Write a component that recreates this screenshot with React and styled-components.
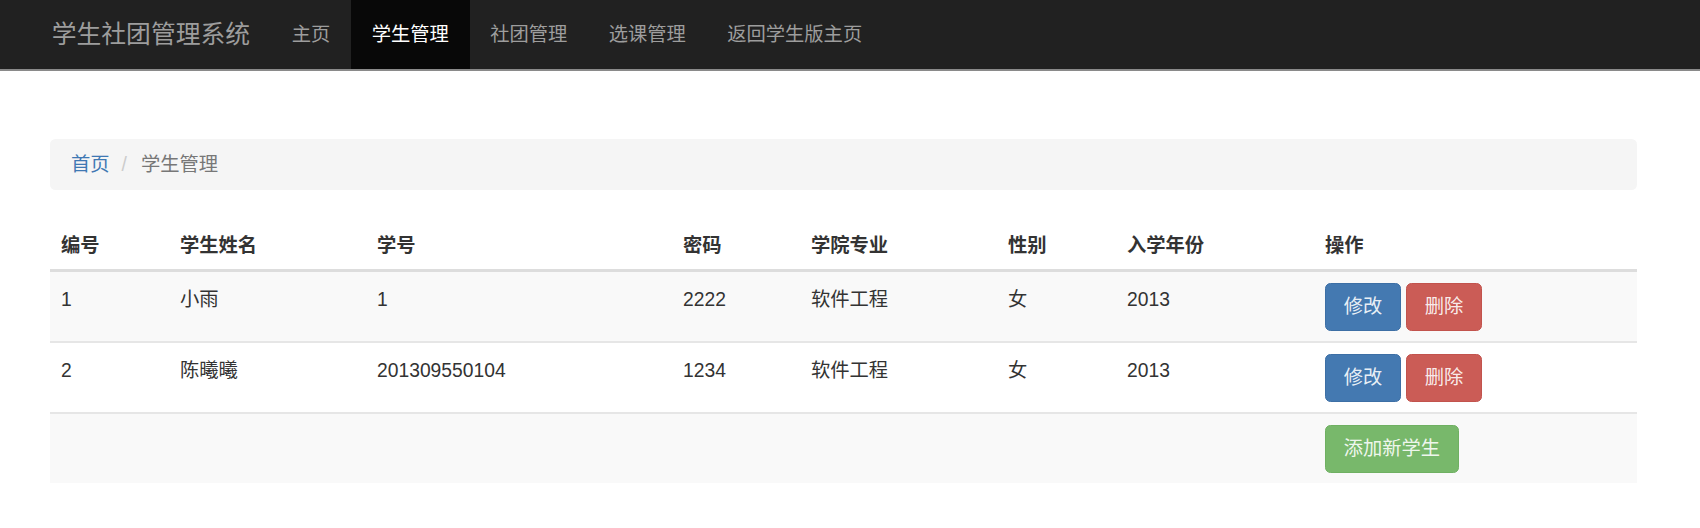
import React from 'react';
import styled, { createGlobalStyle } from 'styled-components';

const GlobalStyle = createGlobalStyle`
  body {
    margin: 0;
    background: #fff;
    font-family: "Liberation Sans", "Noto Sans CJK SC", sans-serif;
    font-size: 19.3px;
    line-height: 27.6px;
    color: #333;
  }
`;

const Navbar = styled.nav`
  display: flex;
  height: 69px;
  padding-left: 31px;
  background: #212121;
  border-bottom: 2px solid #8a8a8a;
`;

const Brand = styled.a`
  padding: 0 21px 0 20.7px;
  font-size: 24.8px;
  line-height: 69px;
  color: #9d9d9d;
  text-decoration: none;
`;

const NavLink = styled.a`
  padding: 0 20.7px;
  line-height: 69px;
  color: ${({ $active }) => ($active ? '#fff' : '#9d9d9d')};
  background: ${({ $active }) => ($active ? '#080808' : 'transparent')};
  text-decoration: none;
`;

const Container = styled.main`
  width: 1587px;
  margin: 68px 0 0 50px;
`;

const Breadcrumb = styled.ol`
  display: flex;
  align-items: center;
  margin: 0 0 28px;
  padding: 11.5px 21px;
  list-style: none;
  background: #f5f5f5;
  border-radius: 5.5px;
`;

const Crumb = styled.li`
  color: ${({ $active }) => ($active ? '#777' : '#3f78b3')};
`;

const Separator = styled.li`
  margin: 0 14px 0 12px;
  color: #ccc;
`;

const Table = styled.table`
  width: 100%;
  border-collapse: collapse;
  table-layout: fixed;
`;

const Th = styled.th`
  padding: 14px 11px 10px;
  text-align: left;
  font-weight: bold;
  vertical-align: bottom;
  border-bottom: 3px solid #ddd;
`;

const Row = styled.tr`
  background: ${({ $striped }) => ($striped ? '#f9f9f9' : '#fff')};
`;

const Td = styled.td`
  padding: 14px 11px 7px;
  vertical-align: top;
  border-top: 2px solid #e6e6e6;
`;

const ActionCell = styled(Td)`
  padding-top: 11px;
  padding-bottom: 10px;
`;

const Actions = styled.div`
  display: flex;
  gap: 5px;
`;

const palette = {
  primary: ['#4479b1', '#3d6fa5'],
  danger: ['#cb5c56', '#c2534d'],
  success: ['#78b86b', '#6fb062'],
};

const Button = styled.button`
  display: inline-flex;
  align-items: center;
  height: 48px;
  padding: 0 17.7px;
  font: inherit;
  color: rgba(255, 255, 255, 0.9);
  background: ${({ $kind }) => palette[$kind][0]};
  border: 1px solid ${({ $kind }) => palette[$kind][1]};
  border-radius: 5.5px;
  cursor: pointer;
`;

const columns = [
  { label: '编号', width: 119 },
  { label: '学生姓名', width: 197 },
  { label: '学号', width: 306 },
  { label: '密码', width: 128 },
  { label: '学院专业', width: 197 },
  { label: '性别', width: 119 },
  { label: '入学年份', width: 198 },
  { label: '操作', width: 323 },
];

const students = [
  { id: 1, name: '小雨', no: '1', pwd: '2222', major: '软件工程', sex: '女', year: '2013' },
  { id: 2, name: '陈曦曦', no: '201309550104', pwd: '1234', major: '软件工程', sex: '女', year: '2013' },
];

const navItems = ['主页', '学生管理', '社团管理', '选课管理', '返回学生版主页'];

export default function App() {
  return (
    <>
      <GlobalStyle />
      <Navbar>
        <Brand href="#">学生社团管理系统</Brand>
        {navItems.map((item) => (
          <NavLink key={item} href="#" $active={item === '学生管理'}>{item}</NavLink>
        ))}
      </Navbar>
      <Container>
        <Breadcrumb>
          <Crumb>首页</Crumb>
          <Separator aria-hidden>/</Separator>
          <Crumb $active>学生管理</Crumb>
        </Breadcrumb>
        <Table>
          <colgroup>
            {columns.map((c) => <col key={c.label} style={{ width: c.width }} />)}
          </colgroup>
          <thead>
            <tr>
              {columns.map((c) => <Th key={c.label}>{c.label}</Th>)}
            </tr>
          </thead>
          <tbody>
            {students.map((s, i) => (
              <Row key={s.id} $striped={i % 2 === 0}>
                <Td>{s.id}</Td>
                <Td>{s.name}</Td>
                <Td>{s.no}</Td>
                <Td>{s.pwd}</Td>
                <Td>{s.major}</Td>
                <Td>{s.sex}</Td>
                <Td>{s.year}</Td>
                <ActionCell>
                  <Actions>
                    <Button $kind="primary">修改</Button>
                    <Button $kind="danger">删除</Button>
                  </Actions>
                </ActionCell>
              </Row>
            ))}
            <Row $striped>
              <Td colSpan={7} />
              <ActionCell>
                <Actions>
                  <Button $kind="success">添加新学生</Button>
                </Actions>
              </ActionCell>
            </Row>
          </tbody>
        </Table>
      </Container>
    </>
  );
}
